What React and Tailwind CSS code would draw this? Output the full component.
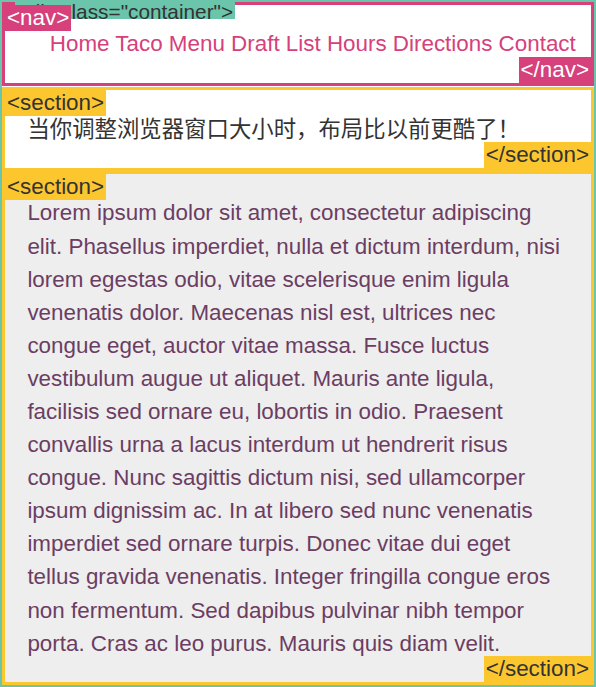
export default function App() {
  const font = "font-['Liberation_Sans','Noto_Sans_CJK_SC',sans-serif]";
  const lorem =
    "Lorem ipsum dolor sit amet, consectetur adipiscing elit. Phasellus imperdiet, nulla et dictum interdum, nisi lorem egestas odio, vitae scelerisque enim ligula venenatis dolor. Maecenas nisl est, ultrices nec congue eget, auctor vitae massa. Fusce luctus vestibulum augue ut aliquet. Mauris ante ligula, facilisis sed ornare eu, lobortis in odio. Praesent convallis urna a lacus interdum ut hendrerit risus congue. Nunc sagittis dictum nisi, sed ullamcorper ipsum dignissim ac. In at libero sed nunc venenatis imperdiet sed ornare turpis. Donec vitae dui eget tellus gravida venenatis. Integer fringilla congue eros non fermentum. Sed dapibus pulvinar nibh tempor porta. Cras ac leo purus. Mauris quis diam velit.";
  return (
    <div className={`${font} relative w-[596px] min-h-[687px] border-2 border-[#6ac5ab] bg-white text-[22.4px] leading-[33.1px]`}>
      <div className="absolute left-[12.6px] top-[-2px] z-10 h-[19px] overflow-hidden whitespace-nowrap bg-[#6ac5ab] px-[2px] text-[20.8px] leading-[24px] text-[#333]">
        &lt;div class="container"&gt;
      </div>
      <nav className="relative border-[3px] border-[#d6407b] bg-white py-[22.4px] pl-[44.8px] pr-[22.4px] text-[#d6407b]">
        <span className="absolute left-0 top-0 z-20 bg-[#d6407b] px-[2px] leading-[25.7px] text-white">&lt;nav&gt;</span>
        <div className="whitespace-nowrap">Home Taco Menu Draft List Hours Directions Contact</div>
        <span className="absolute bottom-0 right-0 z-20 bg-[#d6407b] px-[2px] leading-[25.7px] text-white">&lt;/nav&gt;</span>
      </nav>
      <section className="relative mt-[1.3px] border-[3px] border-[#fcc62f] bg-white p-[22.4px] text-[#333]">
        <span className="absolute left-0 top-0 bg-[#fcc62f] px-[2px] leading-[25.7px] text-[#333]">&lt;section&gt;</span>
        <p className="[text-spacing-trim:space-all]">当你调整浏览器窗口大小时，布局比以前更酷了！</p>
        <span className="absolute bottom-0 right-0 bg-[#fcc62f] px-[2px] leading-[25.7px] text-[#333]">&lt;/section&gt;</span>
      </section>
      <section className="relative border-[3px] border-[#fcc62f] bg-[#eeeeee] p-[22.4px] text-[#6b3d62]">
        <span className="absolute left-0 top-0 bg-[#fcc62f] px-[2px] leading-[25.7px] text-[#333]">&lt;section&gt;</span>
        <p>{lorem}</p>
        <span className="absolute bottom-0 right-0 bg-[#fcc62f] px-[2px] leading-[25.7px] text-[#333]">&lt;/section&gt;</span>
      </section>
    </div>
  );
}
